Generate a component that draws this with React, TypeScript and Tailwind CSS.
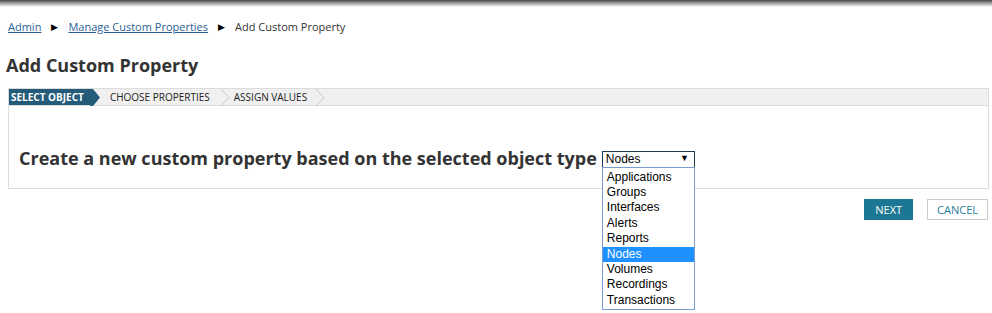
import React from "react";

const options = [
  "Applications",
  "Groups",
  "Interfaces",
  "Alerts",
  "Reports",
  "Nodes",
  "Volumes",
  "Recordings",
  "Transactions",
];

const Chevron = ({ dark }: { dark?: boolean }) =>
  dark ? (
    <svg width="10" height="17" viewBox="0 0 10 17" className="block">
      <polygon points="0,0 3,0 10,8.5 3,17 0,17" fill="#245b78" />
    </svg>
  ) : (
    <svg width="10" height="17" viewBox="0 0 10 17" className="block">
      <polyline points="1,0 9,8.5 1,17" fill="none" stroke="#c8c8c8" strokeWidth="1" />
    </svg>
  );

const App = () => {
  return (
    <div className="w-[992px] h-[313px] bg-white overflow-hidden font-['Open_Sans',sans-serif] text-[#333]">
      <div className="h-[7px] bg-gradient-to-b from-[#4a4a4a] via-[#a8a8a8] to-white" />
      <div className="flex items-center gap-[10px] pl-[8px] pt-[12px] text-[11px] leading-[16px]">
        <a className="text-[#2a5f95] underline">Admin</a>
        <span className="text-[9px] text-black">▶</span>
        <a className="text-[#2a5f95] underline">Manage Custom Properties</a>
        <span className="text-[9px] text-black">▶</span>
        <span>Add Custom Property</span>
      </div>
      <h1 className="pl-[6px] pt-[18px] text-[18px] leading-[24px] font-bold text-[#333]">
        Add Custom Property
      </h1>
      <div className="ml-[8px] mt-[11px] mr-[3px] border border-[#dcdcdc]">
        <div className="flex h-[17px] bg-[#f0f0f0] border-b border-[#dcdcdc] text-[10px] leading-[17px] uppercase">
          <div className="flex">
            <div className="bg-[#245b78] text-white font-bold pl-[2px] pr-[6px]">Select Object</div>
            <Chevron dark />
          </div>
          <div className="flex pl-[10px]">
            <div className="text-[#222] pr-[10px]">Choose Properties</div>
            <Chevron />
          </div>
          <div className="flex pl-[4px]">
            <div className="text-[#222] pr-[8px]">Assign Values</div>
            <Chevron />
          </div>
        </div>
        <div className="h-[82px] pl-[10px] pt-[43px]">
          <div className="flex items-center h-[17px]">
            <span className="text-[18px] leading-[24px] font-bold text-[#333]">
              Create a new custom property based on the selected object type
            </span>
            <div className="relative ml-[5px] mt-[3px]">
              <div className="w-[93px] h-[17px] border border-[#1f3b4d] flex items-center justify-between pl-[3px] pr-[5px] font-['Liberation_Sans',sans-serif] text-[12px] text-black">
                <span>Nodes</span>
                <span className="text-[9px]">▼</span>
              </div>
              <div className="absolute left-0 top-[16px] w-[93px] border border-[#7a9cd3] bg-white font-['Liberation_Sans',sans-serif] text-[12px] leading-[15.4px] text-black pt-[2px] pb-[1px] z-10">
                {options.map((o) => (
                  <div
                    key={o}
                    className={o === "Nodes" ? "bg-[#1e90ff] text-white pl-[4px]" : "pl-[4px]"}
                  >
                    {o}
                  </div>
                ))}
              </div>
            </div>
          </div>
        </div>
      </div>
      <div className="flex justify-end gap-[14px] pr-[4px] mt-[10px]">
        <button className="h-[21px] px-[11px] bg-[#1b7793] text-white text-[11px] leading-[21px]">NEXT</button>
        <button className="h-[21px] px-[9px] border border-[#cccccc] text-[#2a7e9a] text-[11px] leading-[19px] bg-white">CANCEL</button>
      </div>
    </div>
  );
};

export default App;
